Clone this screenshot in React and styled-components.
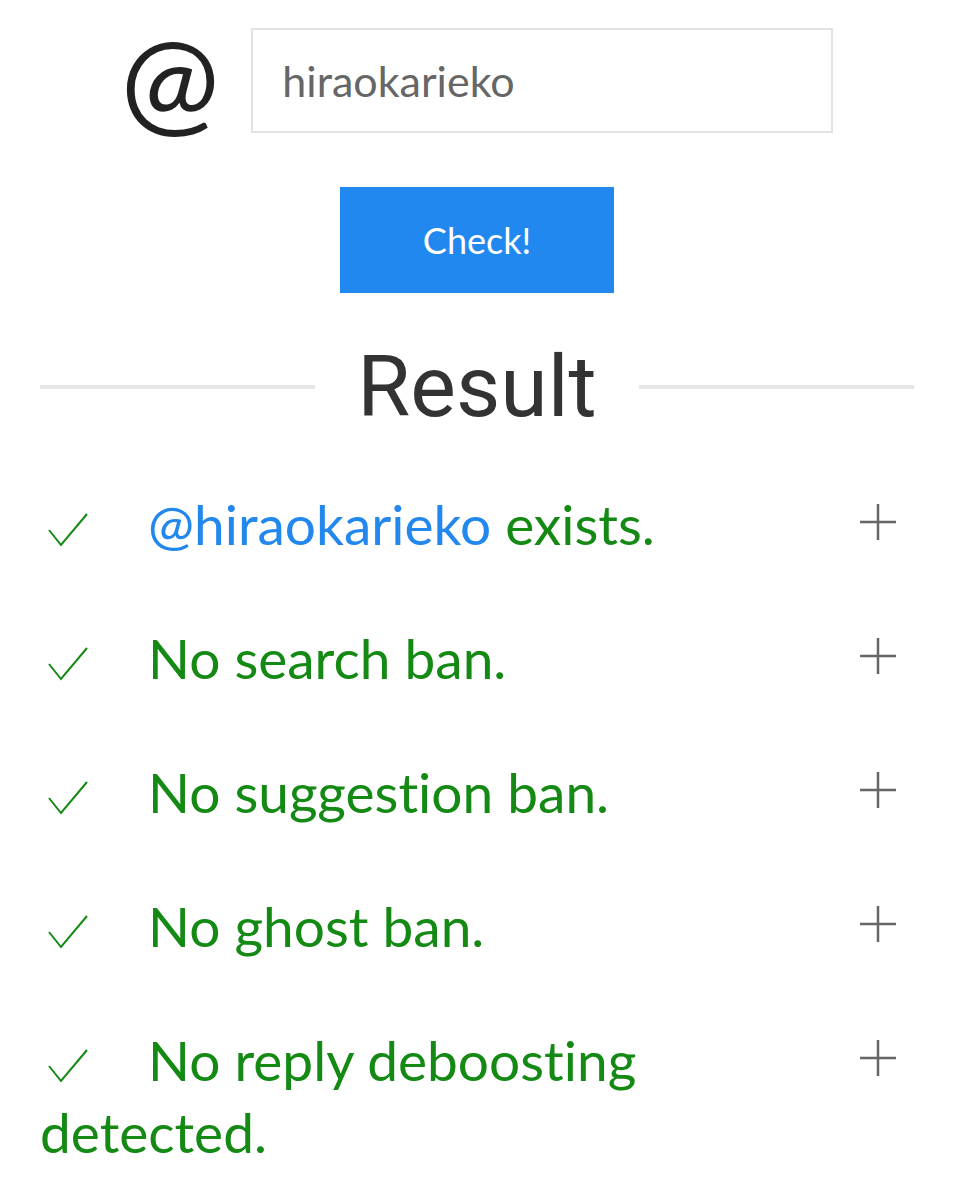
import React from "react";
import styled, { createGlobalStyle } from "styled-components";

const Global = createGlobalStyle`
  body {
    margin: 0;
    background: #fff;
    font-family: "Lato", "Open Sans", sans-serif;
    font-variant-ligatures: none;
  }
`;

const Page = styled.div`
  width: 954px;
  padding: 28px 40px 0;
  box-sizing: border-box;
`;

const InputRow = styled.div`
  display: flex;
  justify-content: center;
  align-items: flex-start;
  gap: 32px;
`;

const At = styled.span`
  font-family: "Lato", sans-serif;
  font-size: 118px;
  line-height: 100px;
  color: #222;
`;

const NameInput = styled.input`
  width: 582px;
  height: 105px;
  box-sizing: border-box;
  border: 2px solid #e2e2e2;
  padding: 0 29px;
  font-family: "Lato", sans-serif;
  font-size: 43px;
  font-variant-ligatures: none;
  color: #666;
  outline: none;
`;

const ButtonRow = styled.div`
  display: flex;
  justify-content: center;
  margin-top: 54px;
`;

const CheckButton = styled.button`
  width: 274px;
  height: 106px;
  border: none;
  background: #2088ef;
  color: #fff;
  font-family: "Lato", sans-serif;
  font-size: 36px;
`;

const Divider = styled.div`
  display: flex;
  align-items: center;
  gap: 42px;
  margin-top: 42px;
  &::before,
  &::after {
    content: "";
    flex: 1;
    height: 4px;
    background: #e6e6e6;
  }
`;

const Heading = styled.h2`
  margin: 0;
  font-family: "Roboto", sans-serif;
  font-weight: 400;
  font-size: 86px;
  line-height: 1.2;
  color: #333;
`;

const List = styled.div`
  margin-top: 50px;
  display: flex;
  flex-direction: column;
  gap: 62px;
`;

const Row = styled.div`
  display: flex;
  align-items: flex-start;
  justify-content: space-between;
`;

const Text = styled.div`
  width: 640px;
  font-size: 55px;
  line-height: 72px;
  color: #148a14;
`;

const CheckMark = styled.svg`
  display: inline-block;
  width: 40px;
  height: 34px;
  margin: 0 60px 0 8px;
  vertical-align: -2px;
`;

const User = styled.span`
  color: #2288ee;
`;

const Plus = styled.svg`
  width: 36px;
  height: 36px;
  margin: 16px 18px 0 0;
`;

const Check = () => (
  <CheckMark viewBox="0 0 40 34">
    <path d="M1 17 L13 32 L39 1" fill="none" stroke="#148a14" strokeWidth="2" />
  </CheckMark>
);

const PlusIcon = () => (
  <Plus viewBox="0 0 36 36">
    <path d="M18 0 V36 M0 18 H36" stroke="#666" strokeWidth="2.5" />
  </Plus>
);

const results = [
  { user: "@hiraokarieko", text: " exists." },
  { text: "No search ban." },
  { text: "No suggestion ban." },
  { text: "No ghost ban." },
  { text: "No reply deboosting detected." },
];

export default function App() {
  return (
    <Page>
      <Global />
      <InputRow>
        <At>@</At>
        <NameInput defaultValue="hiraokarieko" />
      </InputRow>
      <ButtonRow>
        <CheckButton>Check!</CheckButton>
      </ButtonRow>
      <Divider>
        <Heading>Result</Heading>
      </Divider>
      <List>
        {results.map((r, i) => (
          <Row key={i}>
            <Text>
              <Check />
              {r.user && <User>{r.user}</User>}
              {r.text}
            </Text>
            <PlusIcon />
          </Row>
        ))}
      </List>
    </Page>
  );
}
